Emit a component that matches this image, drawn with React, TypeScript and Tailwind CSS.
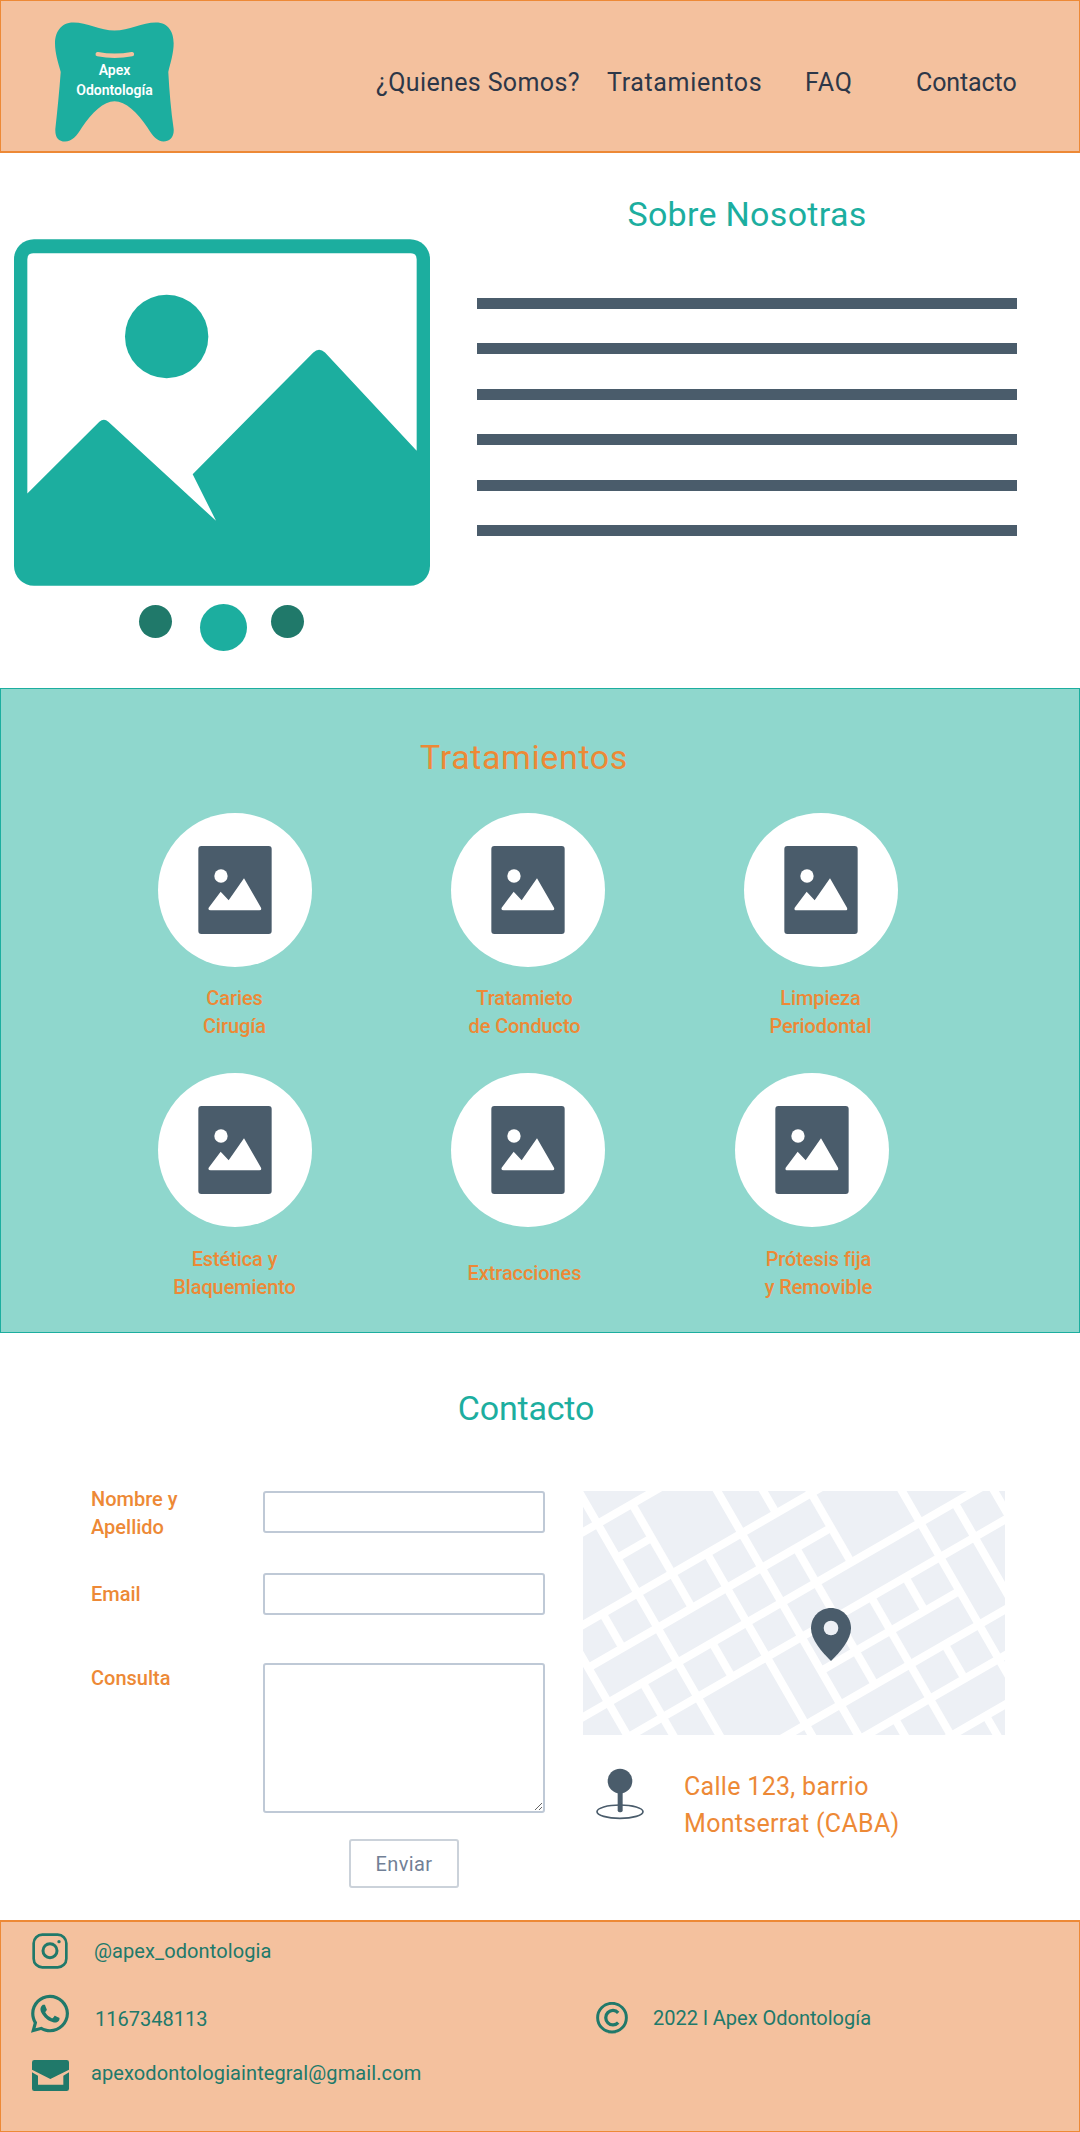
import React from 'react';
import { FaWhatsapp } from 'react-icons/fa';

const ORANGE = 'text-[#ed8936]';

// streets of the map, in the coordinates of the viewBox below
// a: rising to the right, y = c - 0.577x. b: falling to the right, x = d + 0.577y
const a = (c: number, x1 = 0, x2 = 1400) => [x1, c - 0.577 * x1, x2, c - 0.577 * x2];
const b = (d: number, y1 = 0, y2 = 800) => [d + 0.577 * y1, y1, d + 0.577 * y2, y2];

const STREETS = [
  a(182),
  a(318, 141, 245),
  a(460),
  a(598, 55, 783),
  a(737),
  a(875),
  a(1010, 753, 1168),
  a(1145),
  a(1282),
  a(1430),
  b(5),
  b(143, 75, 387),
  b(143, 491, 594),
  b(421),
  b(559, 0, 103),
  b(559, 207, 617),
  b(560, 719, 800),
  b(699, 0, 250),
  b(699, 355, 800),
  b(975),
  b(1113, 71, 800),
  b(1252),
  b(282, 222, 800),
  b(-135, 403, 507),
  b(-134, 611, 800),
  b(-272),
  b(836, 295, 396),
  b(838, 497, 600),
  b(838, 710, 800),
];

const MapView = () => (
  <svg viewBox="39 36 1266 732" className="block w-[422px] h-[244px] bg-[#edf0f5]">
    {STREETS.map((s, i) => (
      <line key={i} x1={s[0]} y1={s[1]} x2={s[2]} y2={s[3]} stroke="#ffffff" strokeWidth="24" />
    ))}
    <path d="M783 387 C 817 387 843 414 843 448 C 843 482 812 518 783 546 C 754 518 723 482 723 448 C 723 414 749 387 783 387 Z" fill="#4a5c6b" />
    <circle cx="783" cy="447" r="22" fill="#edf0f5" />
  </svg>
);

const Logo = () => (
  <div className="relative w-[119px] h-[120px]">
    <svg viewBox="45 38 354 354" className="block w-[119px] h-[120px]">
      <path
        d="M100 38 C 140 38 180 62 222 62 C 265 62 305 38 345 38 C 385 38 398 70 398 100 C 398 130 388 160 382 185 C 385 240 390 300 398 355 C 400 380 385 392 368 392 C 350 392 335 375 320 350 C 290 305 255 272 222 272 C 190 272 155 305 125 350 C 110 375 95 392 75 392 C 55 392 45 380 46 355 C 52 300 58 240 62 185 C 55 160 45 130 45 100 C 45 70 60 38 100 38 Z"
        fill="#1cae9f"
      />
      <path d="M172 132 Q222 142 274 132" fill="none" stroke="#f4c19e" strokeWidth="13" strokeLinecap="round" />
    </svg>
    <div className="absolute left-0 right-0 top-[38px] text-center text-white text-[14px] leading-[20px] font-semibold">
      Apex
      <br />
      Odontología
    </div>
  </div>
);

const BigPicture = () => (
  <svg viewBox="42 55 1248 1040" className="block w-[416px] h-[347px]">
    <rect x="42" y="55" width="1248" height="1040" rx="60" fill="#1cae9f" />
    <path
      d="M82 115 Q82 97 100 97 H1232 Q1250 97 1250 115 V690 L975 395 Q957 378 940 395 L578 760 L648 900 L325 603 Q312 590 298 603 L82 818 Z"
      fill="#ffffff"
    />
    <circle cx="500" cy="347" r="125" fill="#1cae9f" />
  </svg>
);

const SmallPicture = () => (
  <svg viewBox="205 168 220 264" className="block w-[74px] h-[88px]">
    <rect x="205" y="168" width="220" height="264" rx="9" fill="#4a5c6b" />
    <circle cx="273" cy="258" r="20" fill="#ffffff" />
    <path d="M236 353 L272 305 L296 331 L342 265 L393 353 Q396 361 388 361 H242 Q233 361 236 353 Z" fill="#ffffff" />
  </svg>
);

const Treatment = ({
  lines,
  circleClass = '',
  labelClass = 'mt-[17px]',
}: {
  lines: string[];
  circleClass?: string;
  labelClass?: string;
}) => (
  <div className="flex flex-col items-center">
    <div className={`w-[154px] h-[154px] rounded-full bg-white flex items-center justify-center ${circleClass}`}>
      <SmallPicture />
    </div>
    <div className={`h-[56px] flex flex-col justify-center text-center text-[20px] leading-[28.5px] font-medium tracking-[-0.1px] ${ORANGE} ${labelClass}`}>
      {lines.map((l) => (
        <div key={l}>{l}</div>
      ))}
    </div>
  </div>
);

const FIELD = 'block w-[282px] bg-white border-2 border-[#bfc9d6] rounded-[3px]';

const Footer = () => (
  <footer className="h-[212px] bg-[#f4c19e] border border-t-2 border-[#ed8936] flex text-[#20796a] text-[20px]">
    <div className="w-[595px] pl-[31px]">
      <div className="flex items-center mt-[11px] h-[36px]">
        <svg viewBox="96 72 108 108" className="w-[36px] h-[36px]" fill="none" stroke="#20796a">
          <rect x="101" y="77" width="98" height="98" rx="26" strokeWidth="8" />
          <circle cx="150" cy="125" r="21" strokeWidth="9" />
          <circle cx="177" cy="98" r="5" fill="#20796a" stroke="none" />
        </svg>
        <span className="ml-[26px] tracking-[0.1px]">@apex_odontologia</span>
      </div>
      <div className="flex items-start mt-[26px] h-[38px]">
        <FaWhatsapp className="w-[38px] h-[43.4px] -ml-[1px] -mt-[2.7px]" />
        <span className="ml-[26px] mt-[9px]">1167348113</span>
      </div>
      <div className="flex items-start mt-[27px]">
        <svg viewBox="96 453 111 93" className="w-[37px] h-[31px]">
          <rect x="96" y="453" width="111" height="93" rx="7" fill="#20796a" />
          <path d="M96 482 L151 510 L207 482 V490 L190 500 V527 H114 V500 L96 490 Z" fill="#f4c19e" />
        </svg>
        <span className="ml-[22px] -mt-[2px] tracking-[0.1px]">apexodontologiaintegral@gmail.com</span>
      </div>
    </div>
    <div className="flex items-center h-[32px] mt-[80px]">
      <svg viewBox="76 95 98 98" className="w-[32px] h-[32px]" fill="none" stroke="#20796a">
        <circle cx="125" cy="143" r="44" strokeWidth="9" />
        <path d="M144 128 A 22 22 0 1 0 144 158" strokeWidth="10" />
      </svg>
      <span className="ml-[25px]">2022 l Apex Odontología</span>
    </div>
  </footer>
);

export default function App() {
  return (
    <div className="w-[1080px] h-[2132px] bg-white font-['Roboto',sans-serif]">
      <header className="h-[153px] bg-[#f4c19e] border border-b-2 border-[#ed8936] flex items-start pl-[54px] pt-[21px] text-[#2d3748] text-[25px] leading-[30px]">
        <Logo />
        <nav className="flex ml-[202px] mt-[46px]">
          <a className="w-[231px] tracking-[0.37px]">¿Quienes Somos?</a>
          <a className="w-[198px] tracking-[0.65px]">Tratamientos</a>
          <a className="w-[111px] tracking-[0.9px]">FAQ</a>
          <a className="tracking-[-0.1px]">Contacto</a>
        </nav>
      </header>

      <section className="h-[535px] flex">
        <div className="w-[477px] pl-[14px] pt-[86px]">
          <BigPicture />
          <div className="flex items-start mt-[19px]">
            <div className="ml-[125px] w-[33px] h-[33px] rounded-full bg-[#20796a]" />
            <div className="ml-[28px] -mt-[1px] w-[47px] h-[47px] rounded-full bg-[#1cae9f]" />
            <div className="ml-[24px] w-[33px] h-[33px] rounded-full bg-[#20796a]" />
          </div>
        </div>
        <div className="w-[540px]">
          <h2 className="mt-[40px] text-center text-[34px] leading-[42px] tracking-[0.3px] text-[#1cae9f]">Sobre Nosotras</h2>
          <div className="mt-[63px] flex flex-col gap-[34.4px]">
            {[0, 1, 2, 3, 4, 5].map((i) => (
              <div key={i} className="h-[11px] bg-[#4a5c6b]" />
            ))}
          </div>
        </div>
      </section>

      <section className="h-[645px] bg-[#8fd7cd] border border-[#1cae9f]">
        <h2 className={`pt-[47px] pr-[32px] text-center text-[34px] leading-[42px] tracking-[0.6px] ${ORANGE}`}>Tratamientos</h2>
        <div className="grid grid-cols-[293px_293px_293px] pl-[87px] mt-[35px] gap-y-[33px]">
          <Treatment lines={['Caries', 'Cirugía']} />
          <Treatment lines={['Tratamieto', 'de Conducto']} labelClass="mt-[17px] mr-[6px]" />
          <Treatment lines={['Limpieza', 'Periodontal']} />
          <Treatment lines={['Estética y', 'Blaquemiento']} labelClass="mt-[18px]" />
          <Treatment lines={['Extracciones']} labelClass="mt-[18px] mr-[6px]" />
          <Treatment lines={['Prótesis fija', 'y Removible']} circleClass="mr-[18px]" labelClass="mt-[18px] mr-[4px]" />
        </div>
      </section>

      <section className="h-[587px]">
        <h2 className="pt-[54px] pr-[28px] text-center text-[34px] leading-[42px] tracking-[-0.2px] text-[#1cae9f]">Contacto</h2>
        <div className="flex mt-[62px] pl-[91px]">
          <form className={`w-[454px] text-[20px] leading-[28px] font-medium ${ORANGE}`}>
            <div className="flex h-[42px]">
              <label className="w-[172px] -mt-[6px]">
                Nombre y
                <br />
                Apellido
              </label>
              <input className={`${FIELD} h-[42px]`} />
            </div>
            <div className="flex h-[42px] mt-[40px]">
              <label className="w-[172px] mt-[7px]">Email</label>
              <input className={`${FIELD} h-[42px]`} />
            </div>
            <div className="flex h-[150px] mt-[48px]">
              <label className="w-[172px] mt-[1px]">Consulta</label>
              <textarea className={`${FIELD} h-[150px]`} />
            </div>
            <button type="button" className="block ml-[258px] mt-[26px] w-[110px] h-[49px] border-2 border-[#cbd2da] rounded-[3px] text-[#718096] font-normal tracking-[0.4px]">
              Enviar
            </button>
          </form>
          <div className="ml-[38px]">
            <MapView />
            <div className="flex items-start mt-[33px]">
              <svg viewBox="78 864 144 156" className="ml-[13px] w-[48px] h-[52px]">
                <ellipse cx="150" cy="995" rx="69" ry="20" fill="none" stroke="#4a5c6b" strokeWidth="5" />
                <rect x="143" y="925" width="15" height="72" rx="6" fill="#4a5c6b" />
                <circle cx="150" cy="903" r="37" fill="#4a5c6b" />
              </svg>
              <div className={`ml-[40px] text-[25px] leading-[37px] tracking-[0.3px] ${ORANGE}`}>
                Calle 123, barrio
                <br />
                Montserrat (CABA)
              </div>
            </div>
          </div>
        </div>
      </section>

      <Footer />
    </div>
  );
}
